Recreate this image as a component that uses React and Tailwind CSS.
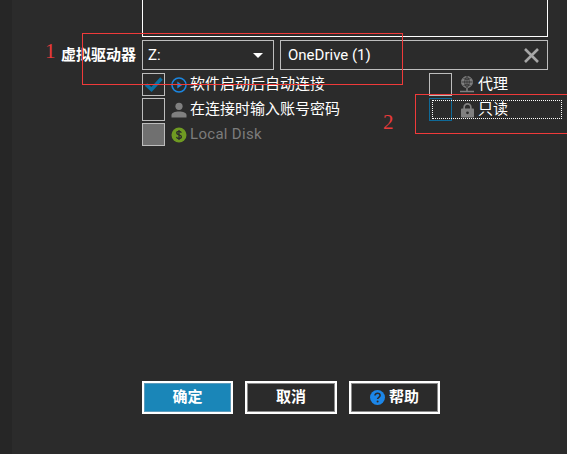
const font = { fontFamily: '"Roboto","Noto Sans CJK SC",sans-serif' };

function Box({ className = "", children }) {
  return <div className={"w-[23px] h-[23px] shrink-0 border flex items-center justify-center " + className}>{children}</div>;
}
const Play = () => (
  <svg width="16" height="16" viewBox="0 0 16 16" fill="none"><circle cx="8" cy="8" r="7" stroke="#1c86e0" strokeWidth="1.6" /><path d="M6.300 4.600 11.200 8l-4.900 3.400z" fill="#1c86e0" /></svg>
);
const User = () => (
  <svg width="16" height="16" viewBox="0 0 16 16" fill="#808080"><circle cx="8" cy="4.300" r="3.600" /><path d="M0.500 15.500v-2.300c0-2.400 3.300-3.700 7.500-3.700s7.500 1.300 7.500 3.700v2.300z" /></svg>
);
const Dollar = () => (
  <svg width="16" height="16" viewBox="0 0 16 16"><circle cx="8" cy="8" r="7.500" fill="#6f9a22" /><path d="M10.300 5.800C10 4.800 9 4.400 8 4.400c-1.300 0-2.300.6-2.300 1.700 0 2.300 4.700 1.300 4.700 3.700 0 1.100-1.100 1.800-2.400 1.800-1.200 0-2.200-.6-2.500-1.700M8 3v10" fill="none" stroke="#2b2b2b" strokeWidth="1.300" /></svg>
);
const Globe = () => (
  <svg width="16" height="17" viewBox="0 0 16 17" fill="none" stroke="#808080"><circle cx="8" cy="6" r="5.500" fill="#808080" /><path d="M2.500 6h11M8 .5v11M4.500 2.500c2 1 5 1 7 0M4.500 9.500c2-1 5-1 7 0M8 .5C5 3 5 9 8 11.500M8 .5c3 2.500 3 8.500 0 11" stroke="#2b2b2b" strokeWidth=".8" /><path d="M8 12v3M1 15.500h14" strokeWidth="1.500" /></svg>
);
const Lock = () => (
  <svg width="13" height="16" viewBox="0 0 14 16" fill="#808080"><path fillRule="evenodd" d="M1 6.500h1.500V5a4.500 4.500 0 0 1 9 0v1.500H13a1 1 0 0 1 1 1V15a1 1 0 0 1-1 1H1a1 1 0 0 1-1-1V7.500a1 1 0 0 1 1-1zM4.300 6.500h5.400V5a2.700 2.700 0 0 0-5.400 0zM7 9.500a1.500 1.500 0 1 0 0 3 1.500 1.500 0 0 0 0-3z" /></svg>
);

export default function App() {
  return (
    <div className="relative w-[567px] h-[454px] overflow-hidden flex bg-[#2b2b2b] text-white text-[15px]" style={font}>
      <div className="w-[12px] bg-[#262626] shrink-0" />
      <div className="flex-1 flex flex-col pl-[130px] pr-[19px]">
        <div className="h-[37px] border-x border-b border-white shrink-0" />
        <div className="relative flex gap-[6px] mt-[3px] h-[30px] shrink-0">
          <span className="absolute right-[412px] top-[5px] font-bold text-[15px] leading-[20px] whitespace-nowrap">虚拟驱动器</span>
          <div className="w-[132px] border border-[#bdbdbd] flex items-center justify-between pl-[5px] pr-[10px]">
            <span>Z:</span>
            <span className="w-0 h-0 border-x-[5px] border-x-transparent border-t-[5px] border-t-white" />
          </div>
          <div className="flex-1 border border-[#bdbdbd] flex items-center justify-between pl-[7px] pr-[8px]">
            <span>OneDrive (1)</span>
            <svg width="15" height="15" viewBox="0 0 15 15" stroke="#a6a6a6" strokeWidth="2.600"><path d="M1 1l13 13M14 1 1 14" /></svg>
          </div>
        </div>
        <div className="flex mt-[3px] shrink-0">
          <div className="w-[287px] flex flex-col gap-[2px]">
            <div className="flex items-center h-[23px]">
              <Box className="border-[#bdbdbd]">
                <svg width="18" height="15" viewBox="0 0 18 15" fill="none" stroke="#0b6fa3" strokeWidth="3.500"><path d="M1 7.500 6.500 12.500 16.500 1.500" /></svg>
              </Box>
              <span className="ml-[6px]"><Play /></span>
              <span className="ml-[3px] leading-[23px] whitespace-nowrap">软件启动后自动连接</span>
            </div>
            <div className="flex items-center h-[23px]">
              <Box className="border-[#bdbdbd]" />
              <span className="ml-[6px]"><User /></span>
              <span className="ml-[3px] leading-[23px] whitespace-nowrap">在连接时输入账号密码</span>
            </div>
            <div className="flex items-center h-[23px]">
              <Box className="border-[#bdbdbd] bg-[#707070]" />
              <span className="ml-[6px]"><Dollar /></span>
              <span className="ml-[3px] leading-[23px] text-[#7c7c7c] tracking-[0.3px] whitespace-nowrap">Local Disk</span>
            </div>
          </div>
          <div className="flex flex-col gap-[2px]">
            <div className="flex items-center h-[23px]">
              <Box className="border-[#bdbdbd]" />
              <span className="ml-[7px]"><Globe /></span>
              <span className="ml-[3px] leading-[23px] whitespace-nowrap">代理</span>
            </div>
            <div className="relative flex items-center h-[23px]">
              <Box className="border-[#0f6a98]" />
              <span className="ml-[9px]"><Lock /></span>
              <span className="ml-[4px] leading-[23px] whitespace-nowrap">只读</span>
              <div className="absolute left-[3px] top-[2px] w-[130px] h-[19px] border border-dotted border-white" />
            </div>
          </div>
        </div>
        <div className="flex gap-[12px] mt-[235px] shrink-0 font-bold">
          <button className="w-[91px] h-[33px] border-2 border-white bg-[#1a86b8] outline outline-1 -outline-offset-3 outline-[#5d9cbc] flex items-center justify-center">确定</button>
          <button className="w-[92px] h-[33px] border-2 border-white bg-[#2b2b2b] outline outline-1 -outline-offset-3 outline-[#8a8a8a] flex items-center justify-center">取消</button>
          <button className="w-[91px] h-[33px] border-2 border-white bg-[#2b2b2b] outline outline-1 -outline-offset-3 outline-[#8a8a8a] flex items-center justify-center gap-[4px]">
            <svg width="15" height="15" viewBox="0 0 15 15"><circle cx="7.500" cy="7.500" r="7.500" fill="#1c86e8" /><path d="M5 5.600C5 4.200 6.200 3.300 7.500 3.300s2.600.8 2.600 2.200c0 1.800-2.500 1.900-2.500 3.600" fill="none" stroke="#2b2b2b" strokeWidth="1.600" /><circle cx="7.600" cy="11.400" r="1" fill="#2b2b2b" /></svg>
            帮助
          </button>
        </div>
      </div>

      <div className="absolute left-[82px] top-[33px] w-[321px] h-[52px] border border-[#f03a3a]" />
      <div className="absolute left-[415px] top-[94px] w-[170px] h-[40px] border border-[#f03a3a]" />
      <span className="absolute left-[45px] top-[39px] text-[#e83a3a] text-[21px] leading-[24px]" style={{ fontFamily: '"Liberation Serif",serif' }}>1</span>
      <span className="absolute left-[383px] top-[110px] text-[#e83a3a] text-[21px] leading-[24px]" style={{ fontFamily: '"Liberation Serif",serif' }}>2</span>
    </div>
  );
}
